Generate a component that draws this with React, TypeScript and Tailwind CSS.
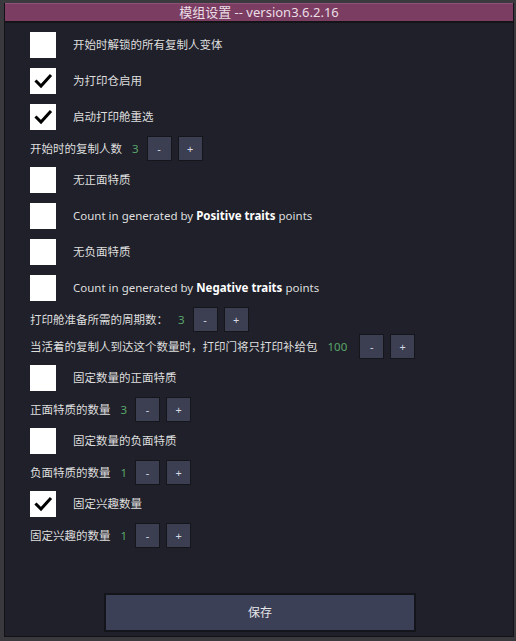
import React from "react";

const font = { fontFamily: '"Noto Sans", "Noto Sans CJK SC", sans-serif' };

function Check({ checked }: { checked?: boolean }) {
  return (
    <div className="w-[26px] h-[26px] bg-white flex items-center justify-center shrink-0">
      {checked && (
        <svg width="20" height="20" viewBox="0 0 20 20">
          <path d="M3.5 10.5 L8 15 L17 5" fill="none" stroke="#000" strokeWidth="3" strokeLinecap="square" />
        </svg>
      )}
    </div>
  );
}

function CheckRow({ checked, children }: { checked?: boolean; children: React.ReactNode }) {
  return (
    <div className="h-[36px] flex items-center pl-[25px]">
      <Check checked={checked} />
      <div className="ml-[17px] text-[11.5px] text-[#dedede] leading-none">{children}</div>
    </div>
  );
}

function Btn({ label }: { label: string }) {
  return (
    <div className="w-[25px] h-[25px] bg-[#3b3f51] border border-[#15161c] flex items-center justify-center text-[11px] text-[#d6d9e4] leading-none shrink-0">
      {label}
    </div>
  );
}

function NumRow({ label, value, wide }: { label: string; value: string; wide?: boolean }) {
  return (
    <div className="h-[27px] flex items-center pl-[25px]">
      <div className="text-[11.5px] text-[#dedede] leading-none">{label}</div>
      <div className="ml-[10px] text-[11.5px] text-[#5aa56b] leading-none">{value}</div>
      <div className={wide ? "ml-[12px] flex gap-[6px]" : "ml-[8px] flex gap-[6px]"}>
        <Btn label="-" />
        <Btn label="+" />
      </div>
    </div>
  );
}

export default function App() {
  return (
    <div className="w-[516px] h-[641px] bg-[#3a393e] pt-[3px] pl-[4px] pr-[2px]" style={font}>
      <div className="w-[510px] h-[634px] flex flex-col bg-[#1f2029] border-l border-r border-b border-[#121218]">
        <div className="h-[18px] bg-[#7c3d62] border-t border-[#8e5276] flex items-center justify-center text-[13px] text-[#eadde6] leading-none">
          模组设置 -- version3.6.2.16
        </div>
        <div className="h-[2px] bg-[#131318]" />
        <div className="flex flex-col pt-[4px]">
          <CheckRow>开始时解锁的所有复制人变体</CheckRow>
          <CheckRow checked>为打印仓启用</CheckRow>
          <CheckRow checked>启动打印舱重选</CheckRow>
          <NumRow label="开始时的复制人数" value="3" />
          <CheckRow>无正面特质</CheckRow>
          <CheckRow>
            Count in generated by <b className="font-bold text-white">Positive traits</b> points
          </CheckRow>
          <CheckRow>无负面特质</CheckRow>
          <CheckRow>
            Count in generated by <b className="font-bold text-white">Negative traits</b> points
          </CheckRow>
          <NumRow label="打印舱准备所需的周期数：" value="3" />
          <NumRow label="当活着的复制人到达这个数量时，打印门将只打印补给包" value="100" wide />
          <CheckRow>固定数量的正面特质</CheckRow>
          <NumRow label="正面特质的数量" value="3" />
          <CheckRow>固定数量的负面特质</CheckRow>
          <NumRow label="负面特质的数量" value="1" />
          <CheckRow checked>固定兴趣数量</CheckRow>
          <NumRow label="固定兴趣的数量" value="1" />
        </div>
        <div className="flex-1" />
        <div className="flex justify-center pb-[4px] pl-[2px]">
          <div className="w-[312px] h-[39px] bg-[#3c4056] border-2 border-[#14151b] flex items-center justify-center text-[12px] text-[#e6e6ea] leading-none">
            保存
          </div>
        </div>
      </div>
    </div>
  );
}
